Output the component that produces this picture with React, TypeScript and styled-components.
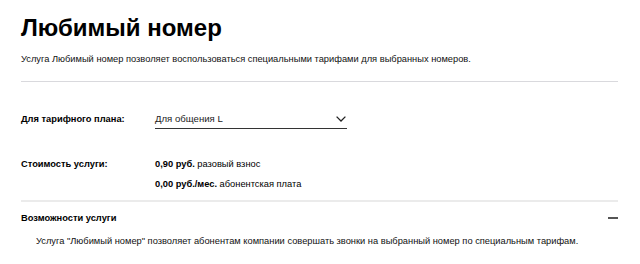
import React from "react";
import styled, { createGlobalStyle } from "styled-components";

const Global = createGlobalStyle`
  html, body { margin: 0; padding: 0; background: #fff; }
  body { font-family: "Liberation Sans", Arial, sans-serif; color: #000; }
`;

const Page = styled.div`
  width: 640px;
  padding: 13px 21px 0 21px;
  box-sizing: border-box;
`;

const Title = styled.h1`
  margin: 0;
  font-size: 24px;
  line-height: 30px;
  font-weight: 700;
  color: #000;
`;

const Lead = styled.p`
  margin: 9px 0 0;
  font-size: 9.3px;
  line-height: 14px;
  color: #111;
`;

const Divider = styled.hr<{ $top: number; $thick?: boolean }>`
  margin: ${(p) => p.$top}px 0 0;
  border: 0;
  height: ${(p) => (p.$thick ? 2 : 1)}px;
  background: ${(p) => (p.$thick ? "#ebebeb" : "#d9d9dd")};
  width: 597px;
`;

const Row = styled.div<{ $top: number }>`
  display: grid;
  grid-template-columns: 134px 192px;
  align-items: start;
  margin-top: ${(p) => p.$top}px;
`;

const Label = styled.div`
  font-size: 9.3px;
  font-weight: 700;
  line-height: 14px;
`;

const Select = styled.div`
  display: flex;
  align-items: center;
  justify-content: space-between;
  border-bottom: 1px solid #333;
  padding: 0 1px 2px 0;
  font-size: 9.6px;
  line-height: 14px;
  color: #222;
`;

const Prices = styled.div`
  display: flex;
  flex-direction: column;
  gap: 6px;
`;

const Price = styled.div`
  font-size: 9.3px;
  line-height: 14px;
  white-space: nowrap;
  b { font-weight: 700; }
`;

const AccHead = styled.div`
  display: flex;
  justify-content: space-between;
  align-items: center;
  margin-top: 9px;
  font-size: 9.3px;
  font-weight: 700;
  line-height: 14px;
  width: 597px;
`;

const Minus = styled.span`
  width: 10px;
  height: 2px;
  background: #555;
`;

const AccBody = styled.p`
  margin: 9px 0 0 15px;
  font-size: 9.3px;
  line-height: 14px;
  color: #111;
  white-space: nowrap;
`;

const Chevron = () => (
  <svg width="10" height="6" viewBox="0 0 10 6" fill="none">
    <path d="M0.6 0.6L5 5L9.4 0.6" stroke="#222" strokeWidth="1.3" />
  </svg>
);

export default function App() {
  return (
    <>
      <Global />
      <Page>
        <Title>Любимый номер</Title>
        <Lead>
          Услуга Любимый номер позволяет воспользоваться специальными тарифами для выбранных номеров.
        </Lead>
        <Divider $top={15} />
        <Row $top={30}>
          <Label>Для тарифного плана:</Label>
          <Select>
            <span>Для общения L</span>
            <Chevron />
          </Select>
        </Row>
        <Row $top={28}>
          <Label>Стоимость услуги:</Label>
          <Prices>
            <Price>
              <b>0,90 руб.</b> разовый взнос
            </Price>
            <Price>
              <b>0,00 руб./мес.</b> абонентская плата
            </Price>
          </Prices>
        </Row>
        <Divider $top={9} $thick />
        <AccHead>
          <span>Возможности услуги</span>
          <Minus />
        </AccHead>
        <AccBody>
          Услуга "Любимый номер" позволяет абонентам компании совершать звонки на выбранный номер по специальным тарифам.
        </AccBody>
      </Page>
    </>
  );
}
